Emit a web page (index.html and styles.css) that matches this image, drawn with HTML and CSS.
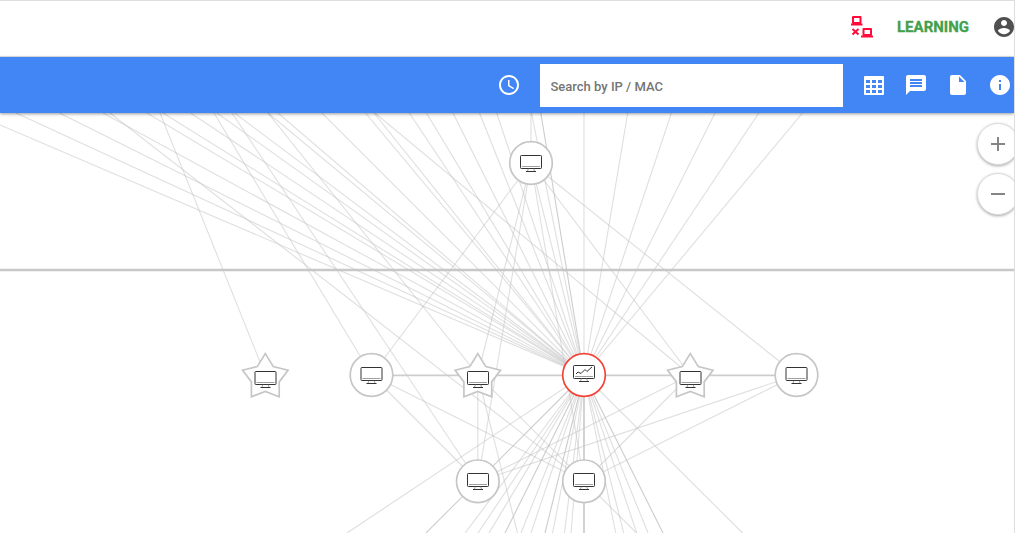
FILE: index.html
```
<!DOCTYPE html>
<html lang="en">
<head>
<meta charset="utf-8">
<title>Network map</title>
<link rel="stylesheet" href="styles.css">
</head>
<body>
<div class="app">
  <header class="header">
    <svg class="offline" viewBox="0 0 24 24" width="24" height="24">
      <path d="M3 2h7.500v6H3zM13.500 14H21v6h-7.500z" fill="none" stroke="currentColor" stroke-width="2" stroke-linejoin="round"/>
      <path d="M1 8.500h11.500v2H1zM11 20.500h12v2H11z" fill="currentColor"/>
      <path d="M2.500 14l6 5.500M8.500 14l-6 5.500" stroke="currentColor" stroke-width="2"/>
    </svg>
    <span class="status">LEARNING</span>
    <svg class="account" viewBox="0 0 24 24" width="24" height="24"><path d="M12 2C6.480 2 2 6.480 2 12s4.480 10 10 10 10-4.480 10-10S17.520 2 12 2zm0 3c1.660 0 3 1.340 3 3s-1.340 3-3 3-3-1.340-3-3 1.340-3 3-3zm0 14.200c-2.500 0-4.710-1.280-6-3.220.03-1.990 4-3.080 6-3.080 1.990 0 5.970 1.090 6 3.080-1.290 1.940-3.500 3.220-6 3.220z"/></svg>
  </header>
  <nav class="toolbar">
    <svg class="icon clock" viewBox="0 0 24 24"><path d="M11.990 2C6.470 2 2 6.480 2 12s4.470 10 9.990 10C17.520 22 22 17.520 22 12S17.520 2 11.990 2zM12 20c-4.420 0-8-3.580-8-8s3.580-8 8-8 8 3.580 8 8-3.580 8-8 8zm.5-13H11v6l5.250 3.150.75-1.230-4.500-2.670z"/></svg>
    <input class="search" type="text" placeholder="Search by IP / MAC" aria-label="Search">
    <div class="actions">
      <svg class="icon" viewBox="0 0 24 24"><path fill-rule="evenodd" d="M3 3h18q1 0 1 1v17q0 1-1 1H3q-1 0-1-1V4q0-1 1-1zM4 7v3h4V7zM10 7v3h4V7zM16 7v3h4V7zM4 12v3h4v-3zM10 12v3h4v-3zM16 12v3h4v-3zM4 17v3h4v-3zM10 17v3h4v-3zM16 17v3h4v-3z"/></svg>
      <svg class="icon" viewBox="0 0 24 24"><path d="M20 2H4c-1.100 0-1.990.9-1.990 2L2 22l4-4h14c1.100 0 2-.9 2-2V4c0-1.100-.9-2-2-2zM6 6h12v2H6zM6 9h12v2H6zM6 12h12v2H6z" fill-rule="evenodd"/></svg>
      <svg class="icon" viewBox="0 0 24 24"><path d="M6 2c-1.100 0-1.990.9-1.990 2L4 20c0 1.100.89 2 1.990 2H18c1.100 0 2-.9 2-2V8l-6-6H6zm7 7V3.500L18.500 9H13z"/></svg>
      <svg class="icon" viewBox="0 0 24 24"><path d="M12 2C6.480 2 2 6.480 2 12s4.480 10 10 10 10-4.480 10-10S17.520 2 12 2zm1 15h-2v-6h2v6zm0-8h-2V7h2v2z"/></svg>
    </div>
  </nav>
  <main class="map">
    <svg class="graph" viewBox="0 113 1014 420" width="1014" height="420">
      <defs>
        <g id="screen">
          <rect x="-10.500" y="-7.500" width="21" height="13" rx="0.800"/>
          <path class="fine" d="M-9 3.500H9M-2.500 5.500L-3.500 8M2.500 5.500L3.500 8"/>
          <path d="M-5 8.500H5"/>
        </g>
        <path id="star" d="M0-21.700L8-8.700 22.700-5 13.900 6.600V21.400L0 16.200-13.900 21.400V6.600L-22.700-5-8-8.700Z"/>
      </defs>
      <path class="divider" d="M0 270H1014"/>
      <g class="links">
        <!-- hub to upper tier -->
        <path d="M584 375L0 125"/><path d="M584 375L16 113"/><path d="M584 375L59.500 113"/><path d="M584 375L103 113"/>
        <path d="M584 375L147 113"/><path d="M584 375L163 113"/><path d="M584 375L190.700 113"/><path d="M584 375L217 113"/>
        <path d="M584 375L234.500 113"/><path d="M584 375L268 113"/><path d="M584 375L278 113"/><path d="M584 375L322 113"/>
        <path d="M584 375L365.500 113"/><path d="M584 375L374 113"/><path d="M584 375L409.300 113"/><path d="M584 375L426.500 113"/>
        <path d="M584 375L453 113"/><path d="M584 375L479.500 113"/><path d="M584 375L496.700 113"/><path d="M584 375L531.500 113"/>
        <path class="strong" d="M584 375L540.800 113"/><path d="M584 375V113"/><path d="M584 375L627.700 113"/>
        <path d="M584 375L671.400 113"/><path d="M584 375L715 113"/><path d="M584 375L758.800 113"/><path d="M584 375L802.500 113"/>
        <!-- peers to upper tier -->
        <path d="M265.300 375L160 113"/><path d="M371.500 375L214 113"/><path d="M477.800 375L268 113"/>
        <path d="M584 481.500L110 113"/><path d="M477.800 481.500L232 113"/><path d="M690.300 375L375 113"/>
        <path d="M531 163V113"/><path d="M531 163L584 375"/><path d="M531 163L371.500 375"/><path d="M531 163L477.800 375"/>
        <path d="M531 163L477.800 481.500"/><path d="M531 163L584 481.500"/><path d="M531 163L690.300 375"/><path d="M531 163L796.500 375"/>
        <!-- middle row -->
        <path class="strong double" d="M371.500 375.300H796.500"/>
        <path d="M371.500 375L477.800 481.500"/><path d="M371.500 375L584 481.500"/>
        <path d="M477.800 375V481.500"/><path d="M477.800 375L636.500 533"/><path d="M477.800 375L517.500 533"/>
        <path d="M690.300 375L477.800 481.500"/><path d="M690.300 375L584 481.500"/>
        <path d="M796.500 375L477.800 481.500"/><path d="M796.500 375L584 481.500"/>
        <!-- hub to lower tier -->
        <path d="M584 375L347 533"/><path class="strong" d="M584 375L426 533"/><path d="M584 375L465 533"/><path d="M584 375L478 533"/>
        <path d="M584 375L489 533"/><path class="strong" d="M584 375L505 533"/><path d="M584 375L521 533"/><path d="M584 375L531 533"/>
        <path class="strong" d="M584 375L545 533"/><path d="M584 375L552.500 533"/><path d="M584 375L564.500 533"/><path d="M584 375L571 533"/>
        <path class="strong double" d="M584 375V533"/><path d="M584 375L615.700 533"/><path d="M584 375L623.700 533"/><path d="M584 375L636.700 533"/>
        <path d="M584 375L648 533"/><path class="strong" d="M584 375L663 533"/><path d="M584 375L742.500 533"/>
      </g>
      <g class="nodes">
        <circle cx="531" cy="163" r="21.300"/>
        <circle cx="371.500" cy="375" r="21.300"/>
        <circle class="hub" cx="584" cy="375" r="21.300"/>
        <circle cx="796.500" cy="375" r="21.300"/>
        <circle cx="477.800" cy="481.300" r="21.300"/>
        <circle cx="584" cy="481.300" r="21.300"/>
        <use href="#star" x="265.300" y="375.300"/>
        <use href="#star" x="477.800" y="375.300"/>
        <use href="#star" x="690.300" y="375.300"/>
      </g>
      <g class="screens">
        <use href="#screen" x="531" y="163"/>
        <use href="#screen" x="371.500" y="375"/>
        <use href="#screen" x="584" y="373"/>
        <use href="#screen" x="796.500" y="375"/>
        <use href="#screen" x="478" y="481"/>
        <use href="#screen" x="584" y="481"/>
        <use href="#screen" x="265.500" y="379"/>
        <use href="#screen" x="478" y="379"/>
        <use href="#screen" x="690.500" y="379"/>
        <path d="M576 374l2-2 3 1.500 4-4 2 2 5-4.500"/>
      </g>
    </svg>
    <div class="zoom">
      <button class="zoom-button" aria-label="Zoom in"><svg viewBox="0 0 16 16" width="16" height="16"><path d="M1 8H15M8 1V15"/></svg></button>
      <button class="zoom-button" aria-label="Zoom out"><svg viewBox="0 0 16 16" width="16" height="16"><path d="M1 8H15"/></svg></button>
    </div>
  </main>
</div>
</body>
</html>
```
FILE: styles.css
```
* { box-sizing: border-box; }
body { margin: 0; background: #fff; font-family: Roboto, sans-serif; overflow: hidden; }
.app {
  width: 1015px; height: 533px; overflow: hidden;
  display: flex; flex-direction: column;
  border-top: 1px solid #dedede; border-right: 1px solid #dedede;
}
.header {
  height: 56px; flex: none; display: flex; align-items: center; justify-content: flex-end;
  padding-bottom: 4px; border-bottom: 1px solid #e4e4e4; overflow: hidden;
}
.offline { color: #ff0a3a; margin-right: 23px; flex: none; }
.status { color: #43a04b; font-size: 15px; font-weight: 700; line-height: 20px; width: 72px; white-space: nowrap; margin-right: 23px; -webkit-text-stroke: .3px #43a04b; }
.account { fill: #505050; margin-right: -2px; flex: none; }
.toolbar {
  height: 56px; flex: none; display: flex; align-items: center; justify-content: flex-end;
  padding-right: 2px; background: #4285f4; box-shadow: 0 1px 3px rgba(0,0,0,.4);
  position: relative; z-index: 1;
}
.icon { width: 24px; height: 24px; fill: #fff; flex: none; display: block; }
.clock { margin-right: -0.5px; }
.search {
  width: 303px; height: 43px; margin: 1px 19px 0 20px; padding: 1px 10px 0 10.5px;
  border: 0; border-radius: 0; background: #fff; font: 500 13px Roboto, sans-serif; color: #757575;
}
.search::placeholder { color: #757575; opacity: 1; }
.actions { display: flex; gap: 18px; }
.map { position: relative; flex: 1; overflow: hidden; }
.graph { display: block; }
.divider { stroke: #c8c8c8; stroke-width: 2.4; }
.links { fill: none; stroke: #c4c4c4; stroke-opacity: .55; stroke-width: 1.1; }
.strong { stroke-opacity: .85; }
.double { stroke-width: 1.8; }
.nodes { fill: #fff; stroke: #c6c6c6; stroke-width: 1.7; }
.hub { stroke: #f44336; }
.screens { fill: none; stroke: #333; stroke-width: 1; }
.fine { stroke: #777; stroke-width: .7; }
.zoom { position: absolute; top: 10px; right: -5px; display: flex; flex-direction: column; gap: 8px; }
.zoom-button {
  width: 42px; height: 42px; padding: 0; border: 1px solid #ddd; border-radius: 50%;
  background: #fff; display: flex; align-items: center; justify-content: center;
  box-shadow: 0 1px 3px rgba(0,0,0,.35);
}
.zoom-button path { stroke: #858585; stroke-width: 2; fill: none; }
```
